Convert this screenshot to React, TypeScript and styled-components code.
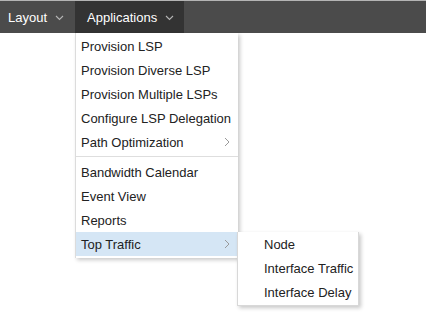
import styled, { createGlobalStyle } from "styled-components";

const GlobalStyle = createGlobalStyle`
    html, body {
        margin: 0;
        padding: 0;
        background: #fff;
        font-family: "Liberation Sans", Arial, sans-serif;
    }
    #root {
        min-height: 335px;
    }
`;

type MenuEntry = {
    label?: string;
    sub?: boolean;
    active?: boolean;
    separator?: boolean;
};

const mainItems: MenuEntry[] = [
    { label: "Provision LSP" },
    { label: "Provision Diverse LSP" },
    { label: "Provision Multiple LSPs" },
    { label: "Configure LSP Delegation" },
    { label: "Path Optimization", sub: true },
    { separator: true },
    { label: "Bandwidth Calendar" },
    { label: "Event View" },
    { label: "Reports" },
    { label: "Top Traffic", sub: true, active: true },
];

const trafficItems = ["Node", "Interface Traffic", "Interface Delay"];

function Chevron() {
    return (
        <svg width="9" height="6" viewBox="0 0 9 6">
            <path d="M1 1 L4.5 4.5 L8 1" fill="none" stroke="#b5b5b5" strokeWidth="1.1" />
        </svg>
    );
}

function Arrow() {
    return (
        <svg width="6" height="10" viewBox="0 0 6 10">
            <path d="M1 1 L5 5 L1 9" fill="none" stroke="#9a9a9a" strokeWidth="1" />
        </svg>
    );
}

function App() {
    return (
        <Page>
            <GlobalStyle />
            <TopBar>
                <Tab>
                    Layout
                    <Chevron />
                </Tab>
                <Tab $open>
                    Applications
                    <Chevron />
                </Tab>
            </TopBar>
            <Menu>
                {mainItems.map((item, i) =>
                    item.separator ? (
                        <Separator key={i} />
                    ) : (
                        <Item key={i} $active={item.active}>
                            <span>{item.label}</span>
                            {item.sub && <Arrow />}
                            {item.active && (
                                <SubMenu>
                                    {trafficItems.map((t) => (
                                        <SubItem key={t}>{t}</SubItem>
                                    ))}
                                </SubMenu>
                            )}
                        </Item>
                    )
                )}
            </Menu>
        </Page>
    );
}

export default App;

const Page = styled.div`
    position: relative;
    min-height: 335px;
`;

const TopBar = styled.div`
    display: flex;
    height: 33px;
    background: #4b4b4b;
    border-top: 1px solid #b4b4b4;
    box-sizing: border-box;
`;

const Tab = styled.div<{ $open?: boolean }>`
    display: flex;
    align-items: center;
    gap: 8px;
    padding: 0 10px 0 12px;
    font-size: 13px;
    color: #fff;
    background: ${(p) => (p.$open ? "#333333" : "transparent")};

    &:first-child {
        padding-left: 8px;
        padding-right: 11px;
    }

    svg {
        margin-top: 2px;
    }
`;

const Menu = styled.div`
    position: absolute;
    top: 33px;
    left: 75px;
    width: 162px;
    padding: 1px 0 2px;
    background: #fff;
    border-left: 1px solid #dcdcdc;
    box-shadow: 2px 2px 4px rgba(0, 0, 0, 0.22);
    z-index: 10;
`;

const Item = styled.div<{ $active?: boolean }>`
    position: relative;
    display: flex;
    align-items: center;
    justify-content: space-between;
    height: 24px;
    padding: 0 8px 0 5px;
    font-size: 13px;
    color: #222;
    white-space: nowrap;
    background: ${(p) => (p.$active ? "#d5e6f5" : "transparent")};
`;

const Separator = styled.div`
    height: 1px;
    margin: 2px 0 3px;
    background: #dedede;
`;

const SubMenu = styled.div`
    position: absolute;
    top: 0;
    left: 161px;
    width: 120px;
    padding: 0 0 1px;
    background: #fff;
    border: 1px solid #d8d8d8;
    border-top: none;
    box-shadow: 2px 2px 4px rgba(0, 0, 0, 0.22);
`;

const SubItem = styled.div`
    display: flex;
    align-items: center;
    height: 24px;
    padding-left: 26px;
    font-size: 13px;
    color: #222;
    white-space: nowrap;
`;
